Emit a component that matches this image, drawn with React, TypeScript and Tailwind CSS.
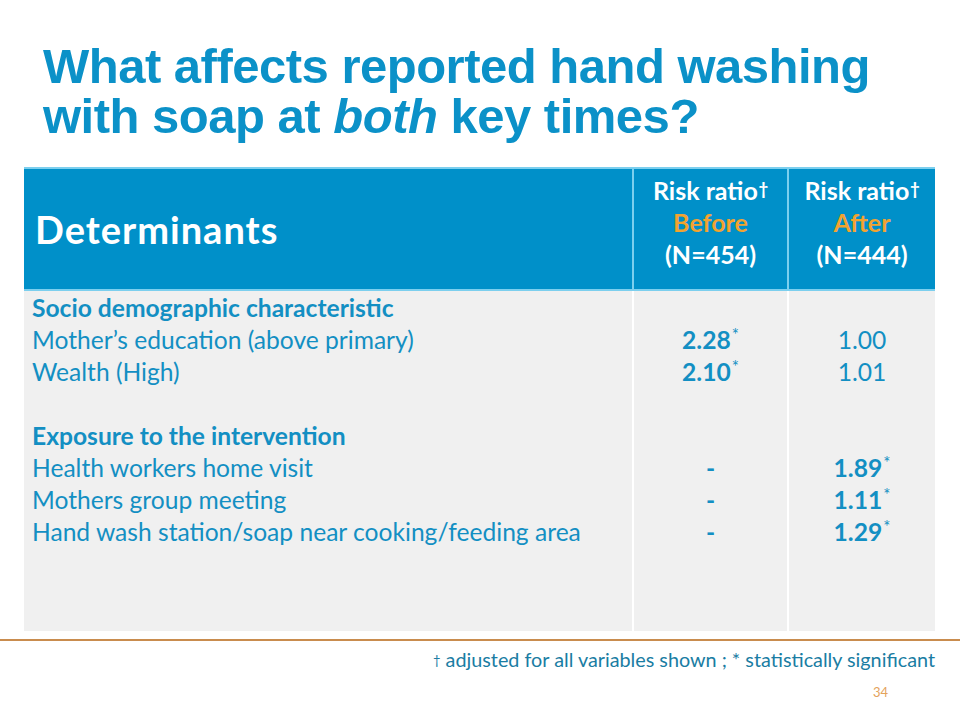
import React from 'react';

const sans = { fontFamily: 'Lato, "Open Sans", sans-serif' };

interface Row {
  label: string;
  heading?: boolean;
  before?: string;
  beforeSig?: boolean;
  after?: string;
  afterSig?: boolean;
}

const rows: Row[] = [
  { label: 'Socio demographic characteristic', heading: true },
  { label: 'Mother\u2019s education (above primary)', before: '2.28', beforeSig: true, after: '1.00' },
  { label: 'Wealth (High)', before: '2.10', beforeSig: true, after: '1.01' },
  { label: '' },
  { label: 'Exposure to the intervention', heading: true },
  { label: 'Health workers home visit', before: '-', after: '1.89', afterSig: true },
  { label: 'Mothers group meeting', before: '-', after: '1.11', afterSig: true },
  { label: 'Hand wash station/soap near cooking/feeding area', before: '-', after: '1.29', afterSig: true },
];

const Value: React.FC<{ v?: string; sig?: boolean }> = ({ v, sig }) => {
  if (!v) return <div className="h-8">&nbsp;</div>;
  return (
    <div className={`h-8 leading-8 text-center ${sig || v === '-' ? 'font-bold' : ''}`}>
      {v}
      {sig && <sup className="text-[17px] font-normal relative -top-[8px] ml-[1px]">*</sup>}
    </div>
  );
};

const HeadCol: React.FC<{ when: string; n: string }> = ({ when, n }) => (
  <div className="flex flex-col items-center pt-[5px] text-[25px] leading-8 font-bold text-white">
    <div>
      Risk ratio<sup className="text-[16px] font-black relative -top-[5px] ml-[1px]">†</sup>
    </div>
    <div className="text-[#f2a330]">{when}</div>
    <div>{n}</div>
  </div>
);

export default function App() {
  return (
    <div className="w-[960px] h-[720px] bg-white relative overflow-hidden" style={sans}>
      <h1
        className="pt-[41px] pl-[43px] text-[#0b91c8] font-bold text-[49px] leading-[50px] tracking-[-0.5px]"
        style={{ fontFamily: '"Liberation Sans", Arial, sans-serif' }}
      >
        What affects reported hand washing
        <br />
        with soap at <i>both</i> key times?
      </h1>

      <div className="ml-[24px] mt-[26px] w-[911px]">
        <div className="grid grid-cols-[608px_155px_148px] h-[124px] bg-[#0090c9] border-t-2 border-[#7ccfee] border-b-2">
          <div className="flex items-center pl-[11px] text-white font-bold text-[38px] tracking-[1px]">Determinants</div>
          <div className="border-l-2 border-[#7ccfee]">
            <HeadCol when="Before" n="(N=454)" />
          </div>
          <div className="border-l-2 border-[#7ccfee]">
            <HeadCol when="After" n="(N=444)" />
          </div>
        </div>

        <div className="grid grid-cols-[608px_155px_148px] h-[340px] text-[24.6px] text-[#138fc3]">
          <div className="bg-[#f0f0f0] pl-[8px] pt-[1px]">
            {rows.map((r, i) => (
              <div key={i} className={`h-8 leading-8 whitespace-nowrap ${r.heading ? 'font-bold' : ''}`}>
                {r.label || '\u00a0'}
              </div>
            ))}
          </div>
          <div className="bg-[#f0f0f0] border-l-2 border-white pt-[1px]">
            {rows.map((r, i) => (
              <Value key={i} v={r.before} sig={r.beforeSig} />
            ))}
          </div>
          <div className="bg-[#f0f0f0] border-l-2 border-white pt-[1px]">
            {rows.map((r, i) => (
              <Value key={i} v={r.after} sig={r.afterSig} />
            ))}
          </div>
        </div>
      </div>

      <div className="mt-[8px] h-[2px] bg-[#c98c4e]" />

      <div className="mt-[4px] pr-[25px] text-right text-[19.8px] leading-7 text-[#1a7da3]">
        <sup className="text-[13px] relative -top-[2px]">†</sup> adjusted for all variables shown ; * statistically significant
      </div>

      <div className="mt-[10px] pl-[873px] text-[13px] leading-[18px] text-[#e4a35c]">34</div>
    </div>
  );
}
